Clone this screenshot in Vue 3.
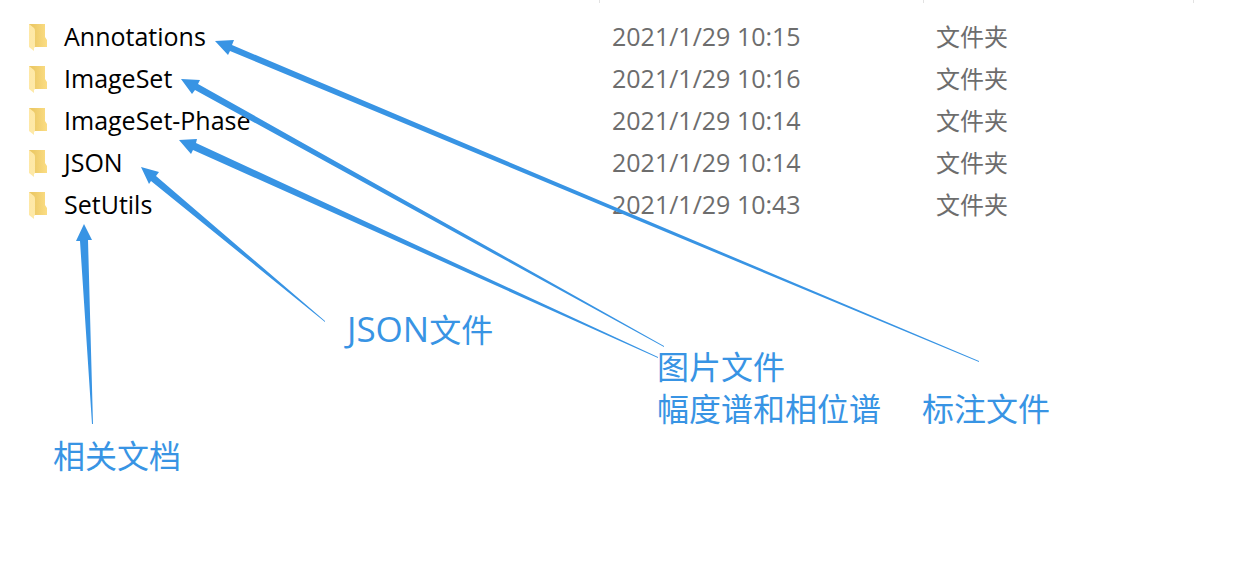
<script setup>
const files = [
  { name: 'Annotations', date: '2021/1/29 10:15', type: '文件夹' },
  { name: 'ImageSet', date: '2021/1/29 10:16', type: '文件夹' },
  { name: 'ImageSet-Phase', date: '2021/1/29 10:14', type: '文件夹' },
  { name: 'JSON', date: '2021/1/29 10:14', type: '文件夹' },
  { name: 'SetUtils', date: '2021/1/29 10:43', type: '文件夹' },
]

// Tip, shaft and tail outlines of the tapered pointers
const arrows = [
  '215,41 234,40 232,45 979,361 979,362 230,51 228,55',
  '181,79 200,80 198,84 664,346 664,347 195,90 192,94',
  '179,140 197,139 196,143 658,357 658,358 193,150 191,154',
  '141,167 159,172 156,176 325,321 325,322 151,181 149,184',
  '84,224 92,240 88,240 93,424 92,424 80,241 76,241',
]
</script>

<template>
  <main class="explorer">
    <table class="files">
      <colgroup>
        <col class="col-name" />
        <col class="col-date" />
        <col class="col-type" />
        <col />
      </colgroup>
      <tbody>
        <tr class="divider" aria-hidden="true">
          <td></td>
          <td></td>
          <td></td>
        </tr>
        <tr v-for="file in files" :key="file.name">
          <td class="name">
            <div class="entry">
              <svg class="folder" viewBox="0 0 20 28" aria-hidden="true">
                <defs>
                  <linearGradient id="back" x1="0" x2="1" y1="0" y2="0">
                    <stop offset="0.2" stop-color="#ecc966" />
                    <stop offset="1" stop-color="#fbdd84" />
                  </linearGradient>
                  <linearGradient id="front" x1="0" x2="1" y1="0" y2="1">
                    <stop offset="0" stop-color="#ffe8a6" />
                    <stop offset="1" stop-color="#fde9a8" />
                  </linearGradient>
                </defs>
                <path d="M1 0H17V13L19 16V23H6L1 18Z" fill="url(#back)" />
                <path d="M1 0L6 4Q7 5 7 7V23L6 24V27L1 23Z" fill="url(#front)" />
              </svg>
              <span>{{ file.name }}</span>
            </div>
          </td>
          <td class="detail">{{ file.date }}</td>
          <td class="detail type">{{ file.type }}</td>
        </tr>
      </tbody>
    </table>

    <svg class="arrows" width="1240" height="578" viewBox="0 0 1240 578" aria-hidden="true">
      <polygon v-for="points in arrows" :key="points" :points="points" />
    </svg>
    <p class="note docs">相关文档</p>
    <p class="note json"><span class="latin">JSON</span>文件</p>
    <p class="note images">图片文件<br />幅度谱和相位谱</p>
    <p class="note labels">标注文件</p>
  </main>
</template>

<style>
body {
  background: #fff;
}
</style>

<style scoped>
.explorer {
  position: relative;
  min-height: 100vh;
  overflow: hidden;
  font-family: "Open Sans", "Noto Sans CJK SC", sans-serif;
}
.files {
  width: 100%;
  table-layout: fixed;
  border-collapse: collapse;
}
.col-name {
  width: 600px;
}
.col-date {
  width: 324px;
}
.col-type {
  width: 270px;
}
td {
  height: 42px;
  padding: 0;
  box-sizing: border-box;
  font-size: 25px;
  line-height: 40px;
  vertical-align: top;
  white-space: nowrap;
}
.divider td {
  height: 16px;
  background: linear-gradient(#e2e2e2, #e2e2e2) right top / 1px 3px no-repeat;
}
.name {
  padding-left: 28px;
  color: #000;
}
.entry {
  display: flex;
  align-items: flex-start;
  gap: 16px;
}
.folder {
  width: 20px;
  height: 28px;
  margin-top: 8px;
}
.detail {
  padding-left: 12px;
  color: #6d6d6d;
}
.type {
  font-size: 24px;
  line-height: 42px;
}
.arrows {
  position: absolute;
  top: 0;
  left: 0;
  fill: #3894e4;
}
.note {
  position: absolute;
  margin: 0;
  color: #3894e4;
  font-size: 32px;
  line-height: 42px;
  white-space: nowrap;
}
.latin {
  font-size: 35px;
}
.docs {
  left: 53px;
  top: 435px;
}
.json {
  left: 347px;
  top: 308px;
}
.images {
  left: 657px;
  top: 346px;
}
.labels {
  left: 922px;
  top: 388px;
}
</style>
